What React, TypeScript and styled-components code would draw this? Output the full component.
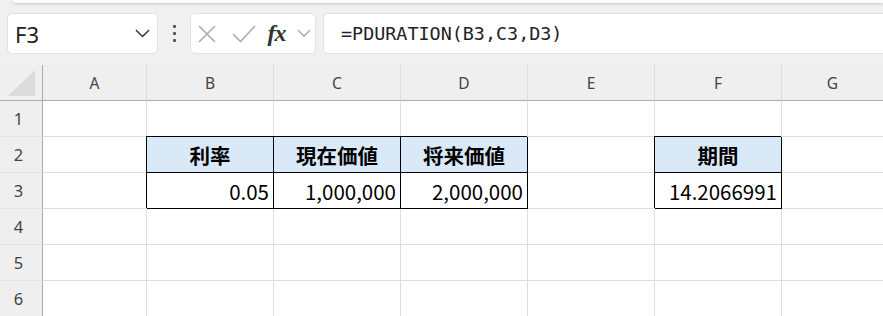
import * as React from 'react'
import styled, { createGlobalStyle } from 'styled-components'

const GlobalStyle = createGlobalStyle`
  html, body {
    margin: 0;
    padding: 0;
    background: #f0f0f0;
    overflow: hidden;
  }
`

const Page = styled.div`
  width: 883px;
  height: 316px;
  overflow: hidden;
  background: #f0f0f0;
  font-family: 'Noto Sans', 'Noto Sans CJK JP', sans-serif;
`

const RibbonEdge = styled.div`
  height: 3px;
  margin-left: 13px;
  background: #ffffff;
  border-bottom-left-radius: 6px;
  box-shadow: 0 1px 3px rgba(0, 0, 0, 0.18);
`

const Toolbar = styled.div`
  height: 62px;
  display: flex;
  align-items: flex-start;
  padding: 10px 0 0 7px;
  box-sizing: border-box;
`

const Box = styled.div`
  height: 41px;
  box-sizing: border-box;
  background: #ffffff;
  border: 1px solid #e2e2e2;
  border-radius: 5px;
  display: flex;
  align-items: center;
`

const NameBox = styled(Box)`
  width: 151px;
  padding: 0 7px 0 7px;
  justify-content: space-between;
`

const NameText = styled.span`
  font-family: 'Noto Sans', sans-serif;
  font-size: 22px;
  color: #222;
`

const Handle = styled.div`
  width: 32px;
  height: 41px;
  display: flex;
  flex-direction: column;
  align-items: center;
  justify-content: center;
  gap: 4px;
`

const HandleDot = styled.span`
  width: 3px;
  height: 3px;
  border-radius: 1px;
  background: #555;
`

const FuncBox = styled(Box)`
  width: 126px;
  padding: 0 2px 0 7px;
`

const IconSlot = styled.span<{ $w: number }>`
  width: ${(p) => p.$w}px;
  display: flex;
  align-items: center;
  justify-content: flex-start;
`

const Fx = styled.span`
  font-family: 'Liberation Serif', 'DejaVu Serif', serif;
  font-style: italic;
  font-weight: 700;
  font-size: 24px;
  color: #333;
  letter-spacing: -1px;
`

const FormulaBox = styled(Box)`
  flex: 1;
  margin-left: 7px;
  margin-right: -10px;
  padding-left: 17px;
`

const FormulaText = styled.span`
  font-family: 'DejaVu Sans Mono', 'Liberation Mono', monospace;
  font-size: 18.4px;
  color: #222;
`

const Sheet = styled.div`
  display: grid;
  grid-template-columns: 43px 104px repeat(5, 127px) 102px;
  grid-template-rows: 36px repeat(6, 36px);
`

const Corner = styled.div`
  background: #efefef;
  border-right: 1px solid #ababab;
  border-bottom: 1px solid #ababab;
  display: flex;
  align-items: flex-end;
  justify-content: center;
  padding-bottom: 4px;
  box-sizing: border-box;
`

const ColHeader = styled.div`
  background: #efefef;
  border-right: 1px solid #dcdcdc;
  border-bottom: 1px solid #ababab;
  display: flex;
  align-items: center;
  justify-content: center;
  font-size: 15.5px;
  color: #444;
  box-sizing: border-box;
`

const RowHeader = styled.div`
  background: #efefef;
  border-right: 1px solid #ababab;
  border-bottom: 1px solid #e4e4e4;
  display: flex;
  align-items: center;
  justify-content: center;
  padding-right: 5px;
  font-size: 16.5px;
  color: #444;
  box-sizing: border-box;
`

const Cell = styled.div<{ $boxed?: boolean; $fill?: boolean; $bold?: boolean; $align?: 'left' | 'center' | 'right' }>`
  background: ${(p) => (p.$fill ? '#dae9f8' : '#ffffff')};
  border-right: 1px solid ${(p) => (p.$boxed ? '#000' : '#dedede')};
  border-bottom: 1px solid ${(p) => (p.$boxed ? '#000' : '#dedede')};
  box-shadow: ${(p) => (p.$boxed ? '-1px -1px 0 0 #000' : 'none')};
  display: flex;
  align-items: center;
  justify-content: ${(p) => (p.$align === 'right' ? 'flex-end' : p.$align === 'center' ? 'center' : 'flex-start')};
  padding: 0 4px;
  font-family: 'Noto Sans CJK JP', 'Noto Sans', sans-serif;
  font-size: 20.5px;
  font-weight: ${(p) => (p.$bold ? 700 : 400)};
  color: #000;
  white-space: nowrap;
  box-sizing: border-box;
`

type CellData = Readonly<{ text: string; kind: 'head' | 'value' }>

const columns = ['A', 'B', 'C', 'D', 'E', 'F', 'G']

const data: Record<string, CellData> = {
  B2: { text: '利率', kind: 'head' },
  C2: { text: '現在価値', kind: 'head' },
  D2: { text: '将来価値', kind: 'head' },
  F2: { text: '期間', kind: 'head' },
  B3: { text: '0.05', kind: 'value' },
  C3: { text: '1,000,000', kind: 'value' },
  D3: { text: '2,000,000', kind: 'value' },
  F3: { text: '14.2066991', kind: 'value' },
}

const Chevron = ({ size, color, stroke }: { size: number; color: string; stroke: number }) => (
  <svg width={size} height={size * 0.6} viewBox="0 0 16 9.6" fill="none">
    <path d="M1.5 1.5 L8 8 L14.5 1.5" stroke={color} strokeWidth={stroke} strokeLinecap="round" strokeLinejoin="round" />
  </svg>
)

export default function App() {
  const rows = [1, 2, 3, 4, 5, 6]
  return (
    <Page>
      <GlobalStyle />
      <RibbonEdge />
      <Toolbar>
        <NameBox>
          <NameText>F3</NameText>
          <Chevron size={15} color="#333" stroke={1.6} />
        </NameBox>
        <Handle>
          <HandleDot />
          <HandleDot />
          <HandleDot />
        </Handle>
        <FuncBox>
          <IconSlot $w={34}>
            <svg width="18" height="18" viewBox="0 0 18 18">
              <path d="M1.5 1.5 L16.5 16.5 M16.5 1.5 L1.5 16.5" stroke="#a8a8a8" strokeWidth="1.5" strokeLinecap="round" />
            </svg>
          </IconSlot>
          <IconSlot $w={36}>
            <svg width="24" height="18" viewBox="0 0 24 18">
              <path d="M1.5 9.5 L8.5 16.5 L22.5 1.5" stroke="#a8a8a8" strokeWidth="1.5" fill="none" strokeLinecap="round" strokeLinejoin="round" />
            </svg>
          </IconSlot>
          <IconSlot $w={30}>
            <Fx>fx</Fx>
          </IconSlot>
          <IconSlot $w={16}>
            <Chevron size={14} color="#9a9a9a" stroke={1.4} />
          </IconSlot>
        </FuncBox>
        <FormulaBox>
          <FormulaText>=PDURATION(B3,C3,D3)</FormulaText>
        </FormulaBox>
      </Toolbar>
      <Sheet>
        <Corner>
          <svg width="27" height="26" viewBox="0 0 27 26">
            <polygon points="0,26 27,26 27,0" fill="#dcdcdc" />
          </svg>
        </Corner>
        {columns.map((c) => (
          <ColHeader key={c}>{c}</ColHeader>
        ))}
        {rows.map((r) => (
          <React.Fragment key={r}>
            <RowHeader>{r}</RowHeader>
            {columns.map((c) => {
              const cell = data[`${c}${r}`]
              return (
                <Cell
                  key={c}
                  $boxed={!!cell}
                  $fill={cell?.kind === 'head'}
                  $bold={cell?.kind === 'head'}
                  $align={cell?.kind === 'head' ? 'center' : 'right'}
                >
                  {cell?.text}
                </Cell>
              )
            })}
          </React.Fragment>
        ))}
      </Sheet>
    </Page>
  )
}
